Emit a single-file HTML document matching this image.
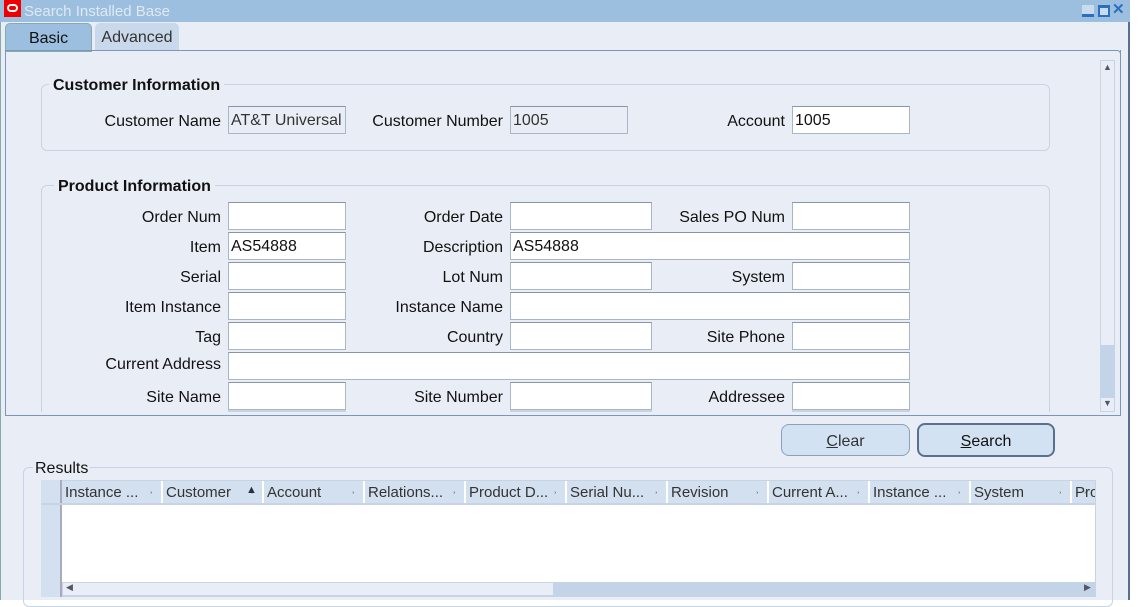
<!DOCTYPE html>
<html><head><style>
*{box-sizing:border-box;margin:0;padding:0}
body{width:1142px;height:600px;background:#fff;font-family:"Liberation Sans",sans-serif;font-size:16px;color:#111;position:relative;overflow:hidden}
.a{position:absolute}
.win{left:0;top:0;width:1130px;height:600px;background:#e9eef6;border-right:2px solid #5a6f90;border-left:1px solid #8aa}
.title{left:0;top:0;width:1130px;height:22px;background:#9dbfdf}
.lbl{position:absolute;text-align:right;white-space:nowrap;line-height:34px}
.in{position:absolute;height:28px;background:#fff;border:1px solid #a9b6c8;border-top-color:#8894a8;padding-left:2px;line-height:28px;white-space:nowrap}
.ro{background:#e9eef6}
.fs{position:absolute;border:1px solid #c8d4e4;border-radius:6px}
.leg{position:absolute;background:#e9eef6;font-weight:bold;padding:0 4px;line-height:22px}
.btn{position:absolute;height:32px;background:#d3e2f3;border:1px solid #8aa0bb;border-radius:8px;text-align:center;line-height:34px}
.th{position:absolute;top:481px;height:22px;background:#d3e0ef;border-right:2px solid #fff;line-height:24px;padding-left:3px;color:#333;white-space:nowrap;overflow:hidden;width:101px;font-size:15px}
.th:after{content:"˒";position:absolute;right:8px;top:-2px;font-size:11px}
</style></head><body>
<div class="a win"></div>
<div class="a title"></div>
<div class="a" style="left:4px;top:0;width:17px;height:17px;background:#e00;"><div class="a" style="left:3px;top:4px;width:11px;height:8px;border:2px solid #fff;border-radius:4px"></div></div>
<div class="a" style="left:24px;top:3px;color:#dfe8f3;font-size:15px">Search Installed Base</div>
<div class="a" style="left:1082px;top:5px;width:12px;height:12px;background:#c8dcef;border-bottom:3px solid #2b6fc0"></div>
<div class="a" style="left:1098px;top:5px;width:12px;height:12px;border:2px solid #2b6fc0;border-top-width:3px;background:#c8dcef"></div>
<div class="a" style="left:1112px;top:0px;color:#2b6fc0;font-weight:bold;font-size:15px">✕</div>
<div class="a" style="left:5px;top:23px;width:87px;height:29px;background:#9dbfdf;border-radius:5px 5px 0 0;border:1px solid #8aa;text-align:center;line-height:30px">Basic</div>
<div class="a" style="left:95px;top:23px;width:84px;height:28px;background:#c9d8ea;border-radius:5px 5px 0 0;text-align:center;line-height:30px;color:#333">Advanced</div>
<div class="a" style="left:5px;top:50px;width:1116px;height:366px;border:1px solid #7b96b8;border-radius:0 4px 4px 0;overflow:hidden"></div>
<div class="a" style="left:1100px;top:60px;width:15px;height:352px;background:#e9eef6;border:1px solid #c8d4e4"></div>
<div class="a" style="left:1100px;top:345px;width:15px;height:53px;background:#c3d3e8"></div>
<div class="a" style="left:1103px;top:62px;font-size:9px;color:#556">▲</div>
<div class="a" style="left:1103px;top:398px;font-size:9px;color:#556">▼</div>
<div class="fs" style="left:41px;top:84px;width:1009px;height:67px"></div>
<div class="leg" style="left:49px;top:75px">Customer Information</div>
<div class="lbl" style="left:60px;width:161px;top:105px">Customer Name</div>
<div class="in ro" style="left:228px;top:106px;width:118px;color:#333">AT&amp;T Universal</div>
<div class="lbl" style="left:340px;width:163px;top:105px">Customer Number</div>
<div class="in ro" style="left:510px;top:106px;width:118px;color:#333">1005</div>
<div class="lbl" style="left:640px;width:145px;top:105px">Account</div>
<div class="in" style="left:792px;top:106px;width:118px">1005</div>
<div class="fs" style="left:41px;top:185px;width:1009px;height:240px"></div>
<div class="leg" style="left:54px;top:176px">Product Information</div>
<div class="lbl" style="left:40px;width:181px;top:201px">Order Num</div><div class="in" style="left:228px;top:202px;width:118px"></div>
<div class="lbl" style="left:320px;width:183px;top:201px">Order Date</div><div class="in" style="left:510px;top:202px;width:142px"></div>
<div class="lbl" style="left:600px;width:185px;top:201px">Sales PO Num</div><div class="in" style="left:792px;top:202px;width:118px"></div>
<div class="lbl" style="left:40px;width:181px;top:231px">Item</div><div class="in" style="left:228px;top:232px;width:118px">AS54888</div>
<div class="lbl" style="left:320px;width:183px;top:231px">Description</div><div class="in" style="left:510px;top:232px;width:400px">AS54888</div>
<div class="lbl" style="left:40px;width:181px;top:261px">Serial</div><div class="in" style="left:228px;top:262px;width:118px"></div>
<div class="lbl" style="left:320px;width:183px;top:261px">Lot Num</div><div class="in" style="left:510px;top:262px;width:142px"></div>
<div class="lbl" style="left:600px;width:185px;top:261px">System</div><div class="in" style="left:792px;top:262px;width:118px"></div>
<div class="lbl" style="left:40px;width:181px;top:291px">Item Instance</div><div class="in" style="left:228px;top:292px;width:118px"></div>
<div class="lbl" style="left:320px;width:183px;top:291px">Instance Name</div><div class="in" style="left:510px;top:292px;width:400px"></div>
<div class="lbl" style="left:40px;width:181px;top:321px">Tag</div><div class="in" style="left:228px;top:322px;width:118px"></div>
<div class="lbl" style="left:320px;width:183px;top:321px">Country</div><div class="in" style="left:510px;top:322px;width:142px"></div>
<div class="lbl" style="left:600px;width:185px;top:321px">Site Phone</div><div class="in" style="left:792px;top:322px;width:118px"></div>
<div class="lbl" style="left:40px;width:181px;top:348px">Current Address</div><div class="in" style="left:228px;top:352px;width:682px"></div>
<div class="lbl" style="left:40px;width:181px;top:381px">Site Name</div><div class="in" style="left:228px;top:382px;width:118px"></div>
<div class="lbl" style="left:320px;width:183px;top:381px">Site Number</div><div class="in" style="left:510px;top:382px;width:142px"></div>
<div class="lbl" style="left:600px;width:185px;top:381px">Addressee</div><div class="in" style="left:792px;top:382px;width:118px"></div>
<div class="a" style="left:228px;top:410px;width:118px;height:2px;background:#c8d4e4"></div>
<div class="a" style="left:510px;top:410px;width:142px;height:2px;background:#c8d4e4"></div>
<div class="a" style="left:792px;top:410px;width:118px;height:2px;background:#c8d4e4"></div>
<div class="a" style="left:6px;top:412px;width:1114px;height:40px;background:#e9eef6"></div>
<div class="a" style="left:5px;top:415px;width:1116px;height:1px;background:#7b96b8"></div>
<div class="a" style="left:1120px;top:50px;width:1px;height:366px;background:#7b96b8"></div>
<div class="btn" style="left:781px;top:424px;width:129px;color:#333"><u>C</u>lear</div>
<div class="btn" style="left:917px;top:423px;width:138px;height:34px;border:2px solid #5a7090"><u>S</u>earch</div>
<div class="fs" style="left:23px;top:467px;width:1090px;height:140px"></div>
<div class="a" style="left:33px;top:459px;background:#e9eef6;padding:0 2px;line-height:20px">Results</div>
<div class="a" style="left:41px;top:480px;width:1055px;height:117px;background:#fff;border:1px solid #c8d4e4"></div>
<div class="a" style="left:41px;top:480px;width:21px;height:117px;background:#d3e0ef;border-right:2px solid #aab"></div>
<div class="th" style="left:62px">Instance ...</div>
<div class="th" style="left:163px">Customer</div>
<div class="a" style="left:246px;top:484px;font-size:11px;color:#234">▲</div>
<div class="th" style="left:264px">Account</div>
<div class="th" style="left:365px">Relations...</div>
<div class="th" style="left:466px">Product D...</div>
<div class="th" style="left:567px">Serial Nu...</div>
<div class="th" style="left:668px">Revision</div>
<div class="th" style="left:769px">Current A...</div>
<div class="th" style="left:870px">Instance ...</div>
<div class="th" style="left:971px">System</div>
<div class="th" style="left:1072px;width:23px;border:none">Pro</div>
<div class="a" style="left:41px;top:503px;width:1055px;height:2px;background:#c8d4e4"></div>
<div class="a" style="left:62px;top:582px;width:1033px;height:14px;background:#c3d3e8"></div>
<div class="a" style="left:62px;top:582px;width:492px;height:14px;background:#e9eef6;border:1px solid #c8d4e4"></div>
<div class="a" style="left:66px;top:582px;font-size:9px;color:#556">◀</div>
<div class="a" style="left:1084px;top:582px;font-size:9px;color:#556">▶</div>
</body></html>
